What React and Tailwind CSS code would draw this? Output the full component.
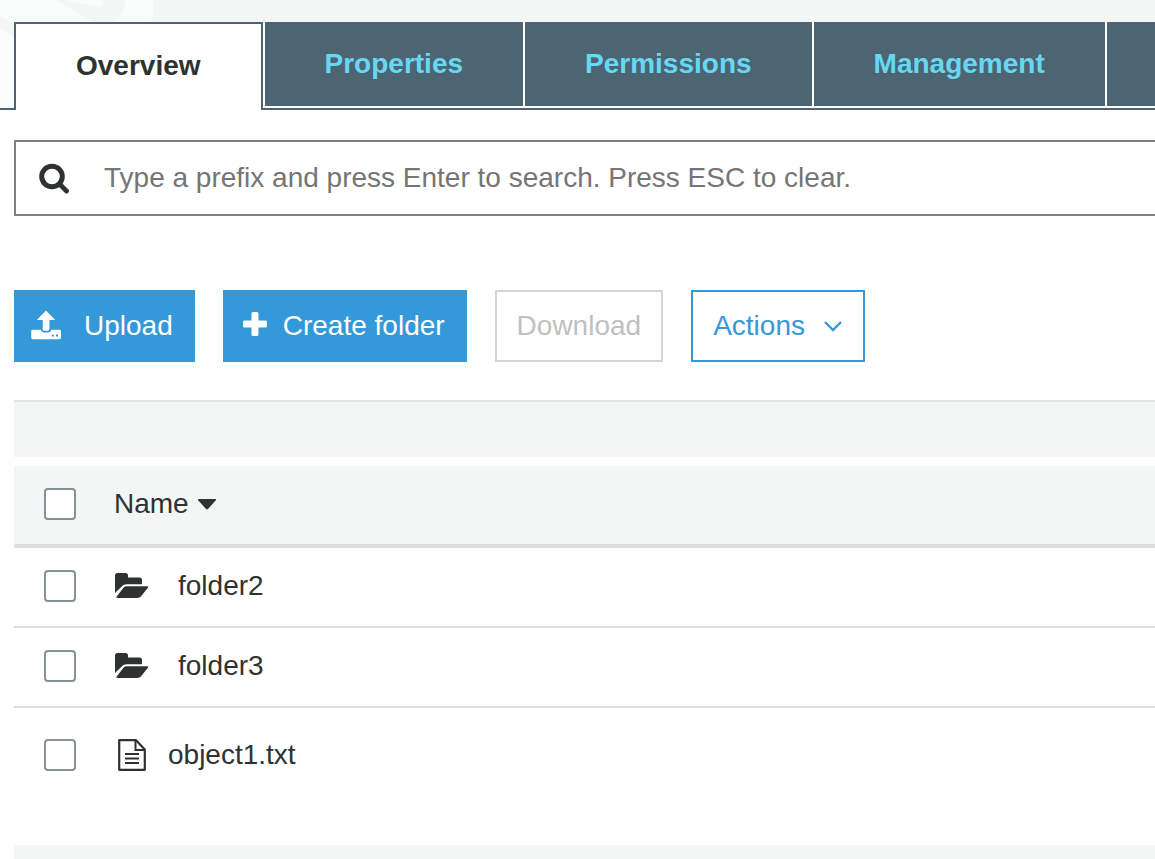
import React, { useState } from 'react';

const tabs = ['Properties', 'Permissions', 'Management'];

const objects = [
    { name: 'folder2', type: 'folder' },
    { name: 'folder3', type: 'folder' },
    { name: 'object1.txt', type: 'file' }
];

const SearchIcon = () => (
    <svg className="w-8 h-8" viewBox="0 0 32 32" fill="none" stroke="currentColor" aria-hidden="true">
        <circle cx="14" cy="14.500" r="10.300" strokeWidth="5" />
        <path d="M22 22.500l6.500 6.500" strokeWidth="4.800" strokeLinecap="round" />
    </svg>
);

const UploadIcon = () => (
    <svg className="w-8 h-8" viewBox="0 1 32 32" fill="currentColor" aria-hidden="true">
        <path d="M16 1.500l9.200 9.500h-5.800v9.400c0 1-1.400 1.400-3.200 1.400s-3.500-.4-3.500-1.400V11H6.800z" />
        <path
            fillRule="evenodd"
            d="M2.600 20.800h8.200c.4 2 2.400 2.800 5.400 2.800s4.800-.8 5.200-2.800H29.600a1.400 1.400 0 0 1 1.400 1.400v6.400a1.600 1.600 0 0 1-1.600 1.600H2.800A1.600 1.600 0 0 1 1.200 28.600v-6.400A1.400 1.400 0 0 1 2.600 20.800zM21.800 25.600v2h2v-2zM26 25.600v2h2v-2z"
        />
    </svg>
);

const PlusIcon = () => (
    <svg className="mb-1 w-6 h-6" viewBox="0 0 24 24" fill="currentColor" aria-hidden="true">
        <path d="M10 0h4a1.500 1.500 0 0 1 1.500 1.500V8.500h7A1.500 1.500 0 0 1 24 10v4a1.500 1.500 0 0 1-1.500 1.500h-7v7A1.500 1.500 0 0 1 14 24h-4a1.500 1.500 0 0 1-1.500-1.500v-7h-7A1.500 1.500 0 0 1 0 14v-4a1.500 1.500 0 0 1 1.500-1.500h7v-7A1.500 1.500 0 0 1 10 0z" />
    </svg>
);

const ChevronIcon = () => (
    <svg className="w-5 h-5" viewBox="0 0 20 20" fill="none" stroke="currentColor" strokeWidth="2.400" aria-hidden="true">
        <path d="M2 6l8 8 8-8" />
    </svg>
);

const FolderIcon = () => (
    <svg className="w-9 h-7" viewBox="0 0 36 28" fill="currentColor" aria-hidden="true">
        <path d="M1 21V3.500A2.500 2.500 0 0 1 3.500 1h8A2.500 2.500 0 0 1 14 3.500V5.500h11.500A2.500 2.500 0 0 1 28 8v4.200H13c-2.300 0-3.800.8-5.200 2.300z" />
        <path d="M12.500 14.200h20.800c.9 0 1.200.8.6 1.500l-6.600 8.400c-1 1.300-2.200 1.900-4 1.900H3.300c-.9 0-1.200-.7-.6-1.400l6.200-8.200c1-1.400 2-2.200 3.600-2.200z" />
    </svg>
);

const FileIcon = () => (
    <svg className="w-9 h-8" viewBox="0 0 36 32" fill="none" stroke="currentColor" strokeWidth="2" aria-hidden="true">
        <path d="M5.200 1.200h16.800l8.800 9.300v20.300H5.200z" strokeWidth="2.200" strokeLinejoin="round" />
        <path d="M21.500 1.500v9.500h9" />
        <path d="M11 15h14M11 19.500h14M11 24h14" />
    </svg>
);

const Checkbox = ({ label }) => (
    <input
        type="checkbox"
        aria-label={label}
        className="block w-8 h-8 appearance-none rounded border-2 border-[#879196] bg-white checked:bg-[#3399d8]"
    />
);

const App = () => {
    const [prefix, setPrefix] = useState('');

    return (
        <div className="overflow-hidden bg-white font-['Liberation_Sans',Arial,sans-serif] text-[28px] leading-8 text-[#2e3231]">
            <header className="relative bg-[#f4f6f6] pt-[22px]">
                <svg className="absolute top-0 left-0 w-40 h-[108px]" viewBox="0 0 160 108" aria-hidden="true">
                    <path d="M0 0h153q2 12-2 22H14v86H0z" fill="#fafcfb" />
                    <path d="M0 16l14 7v14L0 28zM56 0h10l30 7q8 2 8-7h21q1 14-13 22H93z" fill="#f4f6f6" />
                </svg>
                <nav className="relative flex">
                    <span className="w-[14px] shrink-0 border-b-2 border-[#4d6472]"></span>
                    <a
                        href="#overview"
                        className="shrink-0 border-2 border-b-0 border-[#4d6472] bg-white px-[60px] pt-[26px] pb-[28px] font-bold"
                    >
                        Overview
                    </a>
                    <div className="flex min-w-0 flex-1 gap-[2px] overflow-hidden border-b-2 border-[#4d6472] bg-white pb-[2px] pl-[2px]">
                        {tabs.map((tab) => (
                            <a
                                key={tab}
                                href={'#' + tab}
                                className="shrink-0 bg-[#4d6472] px-[60px] py-[26px] font-bold text-[#67d8f2]"
                            >
                                {tab}
                            </a>
                        ))}
                        <span className="flex-1 bg-[#4d6472]"></span>
                    </div>
                </nav>
            </header>

            <main className="pt-[30px] pl-[14px]">
                <label className="flex h-[76px] items-center border-2 border-r-0 border-[#808080] pl-[22px]">
                    <SearchIcon />
                    <input
                        type="text"
                        value={prefix}
                        onChange={(e) => setPrefix(e.target.value)}
                        placeholder="Type a prefix and press Enter to search. Press ESC to clear."
                        aria-label="Search by prefix"
                        className="ml-[34px] flex-1 outline-none placeholder:text-[#757575]"
                    />
                </label>

                <div className="mt-[74px] flex gap-7">
                    <button className="flex h-[72px] items-center bg-[#3399d8] pr-[22px] pl-4 text-white">
                        <UploadIcon />
                        <span className="ml-[22px]">Upload</span>
                    </button>
                    <button className="flex h-[72px] items-center bg-[#3399d8] pr-[22px] pl-5 text-white">
                        <PlusIcon />
                        <span className="ml-4">Create folder</span>
                    </button>
                    <button disabled className="h-[72px] border-2 border-[#d5d5d5] px-5 text-[#c0c0c0]">
                        Download
                    </button>
                    <button className="flex h-[72px] items-center border-2 border-[#3399d8] px-5 text-[#3399d8]">
                        Actions
                        <span className="ml-[18px]">
                            <ChevronIcon />
                        </span>
                    </button>
                </div>

                <div className="mt-[38px] h-[57px] border-t-2 border-[#e1e4e4] bg-[#f4f6f6]"></div>

                <table className="mt-[9px] w-full border-separate border-spacing-0 text-left">
                    <thead>
                        <tr className="h-[82px] bg-[#f4f6f6]">
                            <th className="w-[100px] border-b-4 border-[#dddddd] pb-[2px] pl-[30px]">
                                <Checkbox label="Select all" />
                            </th>
                            <th className="border-b-4 border-[#dddddd] pb-[2px] font-normal">
                                <button className="flex items-center gap-2">
                                    Name
                                    <svg className="w-5 h-3" viewBox="0 0 20 12" fill="currentColor" aria-hidden="true">
                                        <path d="M1.500 1h17q1 .5.300 1.300L11 11q-1 .9-2 0L1.200 2.300Q.5 1.500 1.500 1z" />
                                    </svg>
                                </button>
                            </th>
                        </tr>
                    </thead>
                    <tbody>
                        {objects.map((object) =>
                            object.type === 'folder' ? (
                                <tr key={object.name} className="h-[80px]">
                                    <td className="border-b-2 border-[#dddddd] pb-[3px] pl-[30px]">
                                        <Checkbox label={'Select ' + object.name} />
                                    </td>
                                    <td className="border-b-2 border-[#dddddd] pb-[3px]">
                                        <a href={'#' + object.name} className="flex items-center gap-7">
                                            <FolderIcon />
                                            {object.name}
                                        </a>
                                    </td>
                                </tr>
                            ) : (
                                <tr key={object.name} className="h-[96px]">
                                    <td className="pb-[2px] pl-[30px]">
                                        <Checkbox label={'Select ' + object.name} />
                                    </td>
                                    <td className="pb-[2px]">
                                        <a href={'#' + object.name} className="flex items-center gap-[18px]">
                                            <FileIcon />
                                            {object.name}
                                        </a>
                                    </td>
                                </tr>
                            )
                        )}
                    </tbody>
                </table>

                <div className="mt-[41px] h-[14px] bg-[#f4f6f6]"></div>
            </main>
        </div>
    );
};

export default App;
